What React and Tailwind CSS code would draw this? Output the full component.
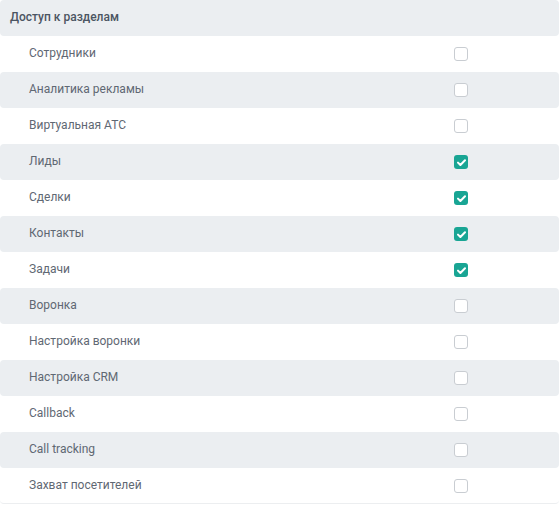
const sections = [
  { name: "Сотрудники", on: false },
  { name: "Аналитика рекламы", on: false },
  { name: "Виртуальная АТС", on: false },
  { name: "Лиды", on: true },
  { name: "Сделки", on: true },
  { name: "Контакты", on: true },
  { name: "Задачи", on: true },
  { name: "Воронка", on: false },
  { name: "Настройка воронки", on: false },
  { name: "Настройка CRM", on: false },
  { name: "Callback", on: false },
  { name: "Call tracking", on: false },
  { name: "Захват посетителей", on: false },
];

function Box({ on }) {
  if (on) {
    return (
      <span className="flex h-[14px] w-[14px] items-center justify-center rounded-[3px] bg-[#19a594]">
        <svg width="9" height="7" viewBox="0 0 9 7" fill="none">
          <path d="M1 3.6 L3.4 6 L8 1.2" stroke="#fff" strokeWidth="2" strokeLinecap="round" strokeLinejoin="round" />
        </svg>
      </span>
    );
  }
  return <span className="block h-[14px] w-[14px] rounded-[3px] border border-[#c9cdd2] bg-white" />;
}

export default function App() {
  return (
    <div className="w-[559px] bg-white font-['Roboto',sans-serif] text-[12px]">
      <div className="flex h-[36px] items-center rounded-[4px] bg-[#ebeef1] pl-[10px] font-medium text-[#4b5562]">
        <span className="-translate-y-px">Доступ к разделам</span>
      </div>
      {sections.map((s, i) => (
        <div
          key={s.name}
          className={
            "flex h-[36px] items-center rounded-[4px] pl-[29px] text-[#5f6873] " +
            (i % 2 === 1 ? "bg-[#ebeef1]" : "bg-white") +
            (i === sections.length - 1 ? " border-b border-[#eceef0]" : "")
          }
        >
          <span className="w-[425px] -translate-y-px">{s.name}</span>
          <Box on={s.on} />
        </div>
      ))}
    </div>
  );
}
